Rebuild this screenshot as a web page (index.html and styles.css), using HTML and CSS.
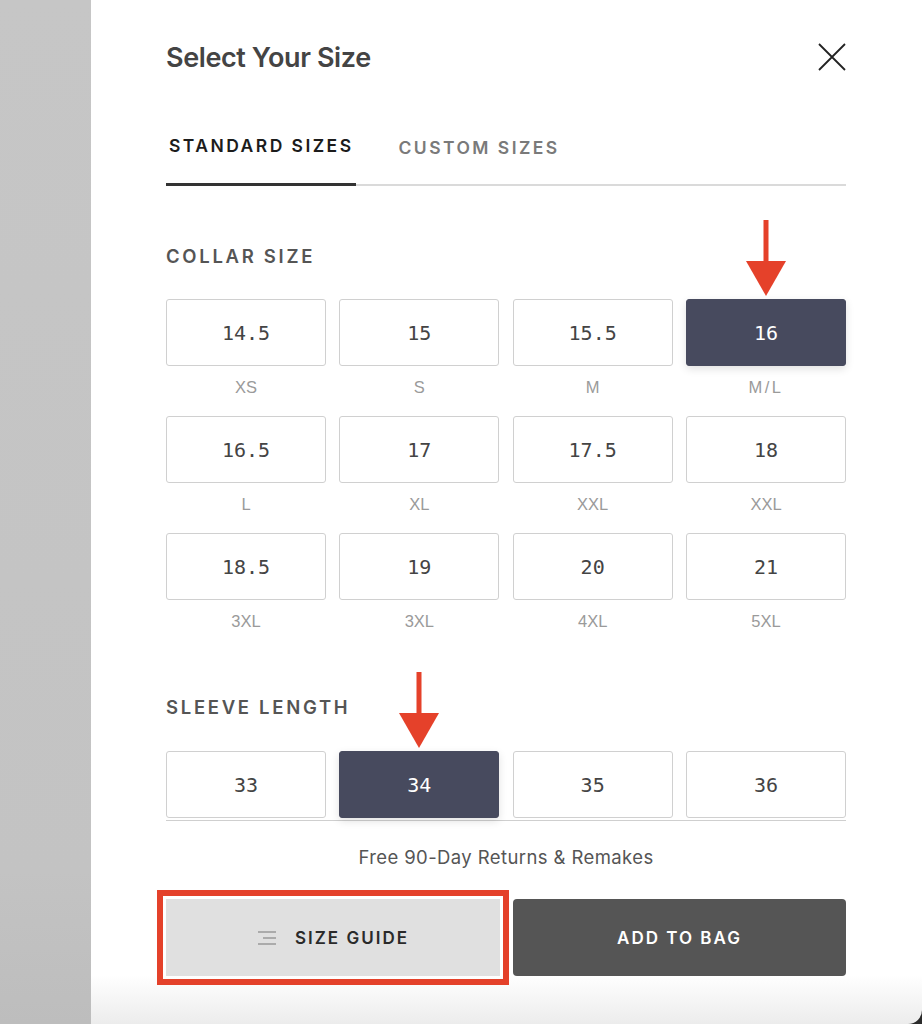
FILE: index.html
```html
<!DOCTYPE html>
<html lang="en">
  <head>
    <meta charset="UTF-8" />
    <meta name="viewport" content="width=device-width, initial-scale=1.0" />
    <title>Select Your Size</title>
    <link rel="stylesheet" href="styles.css">
  </head>
  <body>
    <div class="page-shade"></div>

    <div class="size-panel">
      <div class="panel-header">
        <h2>Select Your Size</h2>
        <button class="close-btn" aria-label="Close">
          <svg width="30" height="30" viewBox="0 0 30 30">
            <path d="M2 2 L28 28 M28 2 L2 28" stroke="#222" stroke-width="1.8" fill="none" />
          </svg>
        </button>
      </div>

      <div class="tabs">
        <button class="tab active">STANDARD SIZES</button>
        <button class="tab">CUSTOM SIZES</button>
      </div>

      <div class="size-scroll">
        <h3 class="section-title collar-title">COLLAR SIZE</h3>
        <div class="size-grid">
          <div class="size-cell"><button class="size-btn">14.5</button><span class="size-label">XS</span></div>
          <div class="size-cell"><button class="size-btn">15</button><span class="size-label">S</span></div>
          <div class="size-cell"><button class="size-btn">15.5</button><span class="size-label">M</span></div>
          <div class="size-cell">
            <span class="annot-arrow">
              <svg width="40" height="76" viewBox="0 0 40 76">
                <rect x="17.5" y="0" width="5" height="44" fill="#e5412a" />
                <polygon points="0,41 40,41 20,76" fill="#e5412a" />
              </svg>
            </span>
            <button class="size-btn selected">16</button><span class="size-label wide">M/L</span>
          </div>

          <div class="size-cell"><button class="size-btn">16.5</button><span class="size-label">L</span></div>
          <div class="size-cell"><button class="size-btn">17</button><span class="size-label">XL</span></div>
          <div class="size-cell"><button class="size-btn">17.5</button><span class="size-label">XXL</span></div>
          <div class="size-cell"><button class="size-btn">18</button><span class="size-label">XXL</span></div>

          <div class="size-cell"><button class="size-btn">18.5</button><span class="size-label">3XL</span></div>
          <div class="size-cell"><button class="size-btn">19</button><span class="size-label">3XL</span></div>
          <div class="size-cell"><button class="size-btn">20</button><span class="size-label">4XL</span></div>
          <div class="size-cell"><button class="size-btn">21</button><span class="size-label">5XL</span></div>
        </div>

        <h3 class="section-title sleeve-title">SLEEVE LENGTH</h3>
        <div class="size-grid sleeve-grid">
          <div class="size-cell"><button class="size-btn">33</button></div>
          <div class="size-cell">
            <span class="annot-arrow">
              <svg width="40" height="76" viewBox="0 0 40 76">
                <rect x="17.5" y="0" width="5" height="44" fill="#e5412a" />
                <polygon points="0,41 40,41 20,76" fill="#e5412a" />
              </svg>
            </span>
            <button class="size-btn selected">34</button>
          </div>
          <div class="size-cell"><button class="size-btn">35</button></div>
          <div class="size-cell"><button class="size-btn">36</button></div>
        </div>
      </div>

      <p class="returns-note">Free 90-Day Returns &amp; Remakes</p>

      <div class="actions">
        <button class="guide-btn">
          <svg width="20" height="16" viewBox="0 0 20 16">
            <path d="M1 2 H19 M6 8 H19 M1 14 H19" stroke="#999" stroke-width="1.5" fill="none" />
          </svg>
          SIZE GUIDE
        </button>
        <button class="bag-btn">ADD TO BAG</button>
      </div>
    </div>
  </body>
</html>
```

FILE: styles.css
```css
* {
  box-sizing: border-box;
}

body {
  margin: 0;
  height: 1024px;
  display: flex;
  background: #2b2b2b;
  font-family: "Liberation Sans", Arial, sans-serif;
  overflow: hidden;
}

.page-shade {
  width: 91px;
  background: linear-gradient(to bottom, #c6c6c6 0%, #c3c3c3 85%, #bdbdbd 100%);
}

.size-panel {
  flex: 1;
  padding: 42px 76px 0 75px;
  background: linear-gradient(to bottom, #fff 0, #fff 975px, #ececec 1024px);
  border-bottom-right-radius: 14px;
}

button {
  font: inherit;
  cursor: pointer;
}

.panel-header {
  display: flex;
  justify-content: space-between;
  align-items: flex-start;
  height: 32px;
}

.panel-header h2 {
  margin: 0;
  font-family: Inter, sans-serif;
  font-size: 27px;
  line-height: 32px;
  font-weight: 600;
  letter-spacing: -0.4px;
  color: #444;
}

.close-btn {
  border: none;
  background: none;
  padding: 0;
  margin-right: -1px;
  width: 30px;
  height: 30px;
}

.tabs {
  margin-top: 62px;
  display: flex;
  gap: 40px;
  border-bottom: 2px solid #dadada;
}

.tab {
  border: none;
  background: none;
  padding: 0 3px 27px 3px;
  margin-bottom: -2px;
  font-family: Inter, sans-serif;
  font-weight: 600;
  font-size: 17.5px;
  line-height: 20px;
  letter-spacing: 2.45px;
  color: #7a7a7a;
}

.tab.active {
  color: #1c1c1c;
  border-bottom: 3px solid #333;
  padding-right: 2px;
}

.size-scroll {
  border-bottom: 1.5px solid #cfcfcf;
  padding-bottom: 2px;
}

.section-title {
  margin: 0;
  font-family: Inter, sans-serif;
  font-weight: 600;
  font-size: 18.5px;
  line-height: 22px;
  letter-spacing: 2.7px;
  color: #555;
}

.collar-title {
  margin-top: 59px;
}

.sleeve-title {
  margin-top: 46px;
}

.size-grid {
  display: grid;
  grid-template-columns: repeat(4, 1fr);
  column-gap: 13.3px;
  margin-top: 32px;
}

.sleeve-grid {
  margin-top: 33px;
}

.size-cell {
  position: relative;
  display: flex;
  flex-direction: column;
}

.size-btn {
  height: 67px;
  border: 1.5px solid #d0d0d0;
  border-radius: 3px;
  background: #fff;
  font-family: "DejaVu Sans Mono", monospace;
  font-size: 20px;
  color: #444;
}

.size-btn.selected {
  background: #474a5e;
  border-color: #474a5e;
  color: #fff;
  box-shadow: 0 3px 8px rgba(0, 0, 0, 0.12);
}

.size-label {
  padding: 11px 0 19px;
  text-align: center;
  font-size: 16.5px;
  line-height: 20px;
  color: #9a9a9a;
}

.size-label.wide {
  letter-spacing: 2.5px;
}

.annot-arrow {
  position: absolute;
  left: 50%;
  bottom: 100%;
  margin-left: -20px;
  margin-bottom: 3px;
  display: block;
  height: 76px;
}

.annot-arrow svg {
  display: block;
}

.returns-note {
  margin: 25px 0 0;
  text-align: center;
  font-family: Inter, sans-serif;
  font-size: 18.5px;
  line-height: 22px;
  letter-spacing: 0.4px;
  color: #555;
}

.actions {
  margin-top: 31px;
  display: grid;
  grid-template-columns: 334px 1fr;
  gap: 13px;
}

.guide-btn,
.bag-btn {
  height: 77px;
  border: none;
  font-family: Inter, sans-serif;
  font-weight: 600;
  font-size: 17px;
  letter-spacing: 2px;
  display: flex;
  align-items: center;
  justify-content: center;
}

.guide-btn {
  gap: 18px;
  background: #e0e0e0;
  color: #2a2a2a;
  outline: 6px solid #e4412a;
  outline-offset: 3px;
}

.bag-btn {
  background: #555;
  color: #fff;
  border-radius: 4px;
}
```
